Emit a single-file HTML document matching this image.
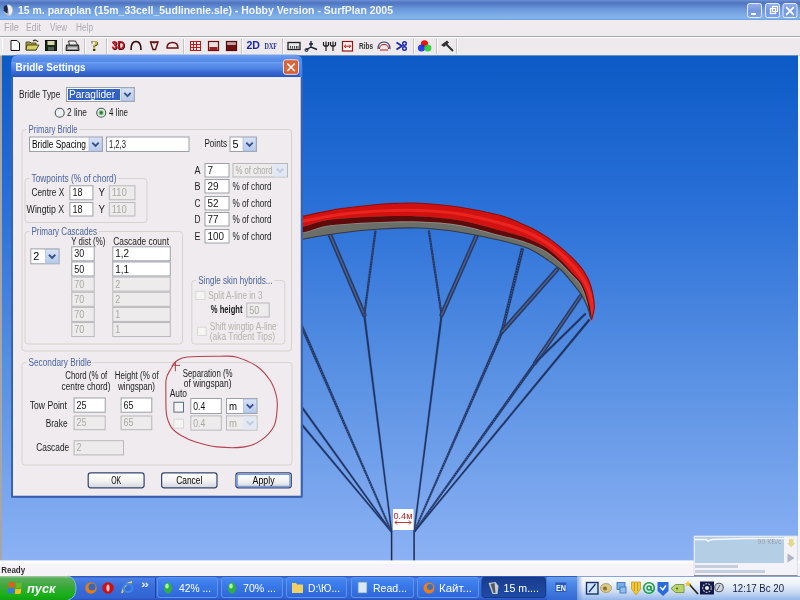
<!DOCTYPE html>
<html><head><meta charset="utf-8"><title>SurfPlan</title>
<style>html,body{margin:0;padding:0;width:800px;height:600px;overflow:hidden;background:#ECE9EC;font-family:"Liberation Sans",sans-serif;} svg{will-change:transform;}</style>
</head><body><svg width="800" height="600" viewBox="0 0 800 600" style="display:block"><defs>
<linearGradient id="sky" x1="0" y1="0" x2="0" y2="1">
 <stop offset="0" stop-color="#0C5AC6"/>
 <stop offset="0.3" stop-color="#2A70D8"/>
 <stop offset="0.6" stop-color="#558EE2"/>
 <stop offset="1" stop-color="#8CB2F4"/>
</linearGradient>
<linearGradient id="title" x1="0" y1="0" x2="0" y2="1">
 <stop offset="0" stop-color="#6C8FD6"/>
 <stop offset="0.15" stop-color="#4F74BE"/>
 <stop offset="0.45" stop-color="#6A98DC"/>
 <stop offset="0.9" stop-color="#86B6EC"/>
 <stop offset="1" stop-color="#6E9CDC"/>
</linearGradient>
<linearGradient id="dtitle" x1="0" y1="0" x2="0" y2="1">
 <stop offset="0" stop-color="#70A0F2"/>
 <stop offset="0.15" stop-color="#5C90EA"/>
 <stop offset="0.45" stop-color="#4C82E2"/>
 <stop offset="0.62" stop-color="#3A6CD4"/>
 <stop offset="0.9" stop-color="#2C5CC4"/>
 <stop offset="1" stop-color="#2850B8"/>
</linearGradient>
<linearGradient id="cbtn" x1="0" y1="0" x2="0" y2="1">
 <stop offset="0" stop-color="#D6E2F6"/>
 <stop offset="1" stop-color="#B6CAEC"/>
</linearGradient>
<linearGradient id="btng" x1="0" y1="0" x2="0" y2="1">
 <stop offset="0" stop-color="#FFFFFF"/>
 <stop offset="0.55" stop-color="#F2F2F0"/>
 <stop offset="1" stop-color="#D2D6E2"/>
</linearGradient>
<linearGradient id="task" x1="0" y1="0" x2="0" y2="1">
 <stop offset="0" stop-color="#2A50B0"/>
 <stop offset="0.1" stop-color="#4A80E8"/>
 <stop offset="0.4" stop-color="#3A6EDC"/>
 <stop offset="0.9" stop-color="#3264D4"/>
 <stop offset="1" stop-color="#2A50B8"/>
</linearGradient>
<linearGradient id="start" x1="0" y1="0" x2="0" y2="1">
 <stop offset="0" stop-color="#A4CCA4"/>
 <stop offset="0.1" stop-color="#5AAE5A"/>
 <stop offset="0.45" stop-color="#3AA83A"/>
 <stop offset="0.8" stop-color="#18B018"/>
 <stop offset="1" stop-color="#12A012"/>
</linearGradient>
<linearGradient id="tray" x1="0" y1="0" x2="0" y2="1">
 <stop offset="0" stop-color="#FAFCFF"/>
 <stop offset="0.3" stop-color="#EDF2FC"/>
 <stop offset="0.65" stop-color="#CCDCF4"/>
 <stop offset="1" stop-color="#94B6EA"/>
</linearGradient>
<linearGradient id="trayl" x1="0" y1="0" x2="1" y2="0">
 <stop offset="0" stop-color="#5080D0" stop-opacity="0.6"/>
 <stop offset="1" stop-color="#5080D0" stop-opacity="0"/>
</linearGradient>
<linearGradient id="enbg" x1="0" y1="0" x2="0" y2="1">
 <stop offset="0" stop-color="#6AA0F0"/>
 <stop offset="0.3" stop-color="#4A88E8"/>
 <stop offset="1" stop-color="#3468D4"/>
</linearGradient>
<linearGradient id="tbtn" x1="0" y1="0" x2="0" y2="1">
 <stop offset="0" stop-color="#4A8AF0"/>
 <stop offset="0.3" stop-color="#3C7CEC"/>
 <stop offset="1" stop-color="#2E66D8"/>
</linearGradient>
<linearGradient id="tbtnact" x1="0" y1="0" x2="0" y2="1">
 <stop offset="0" stop-color="#1A3C8C"/>
 <stop offset="1" stop-color="#1E4CA8"/>
</linearGradient>
<linearGradient id="redc" x1="0" y1="0" x2="0" y2="1">
 <stop offset="0" stop-color="#B81010"/>
 <stop offset="0.35" stop-color="#F01818"/>
 <stop offset="0.7" stop-color="#FF3A30"/>
 <stop offset="1" stop-color="#A01010"/>
</linearGradient>
<linearGradient id="redband" gradientUnits="userSpaceOnUse" x1="0" y1="200" x2="0" y2="320">
 <stop offset="0" stop-color="#D01010"/>
 <stop offset="1" stop-color="#E01818"/>
</linearGradient>
<linearGradient id="inbtn" x1="0" y1="0" x2="0" y2="1">
 <stop offset="0" stop-color="#94B0EC"/>
 <stop offset="0.5" stop-color="#7898DC"/>
 <stop offset="1" stop-color="#7AA4E4"/>
</linearGradient>
</defs>
<rect x="0" y="0" width="800" height="600" fill="#ECE9EC" />
<rect x="0" y="0" width="800" height="20" fill="url(#title)" />
<path d="M3.5,7 Q5.5,4 9,4.5 Q13,5.5 13,10 Q12.5,15.5 9.5,16 Q5.5,15.5 3.5,11.5 Q2.8,9 3.5,7 Z" fill="#B8C0CC" />
<path d="M7,5 Q11.5,5 12.2,9.5 Q12.5,14 9.5,15.5 Q9,10 7,5 Z" fill="#ECEEF4" />
<path d="M3.5,7 Q5,4.8 7,5 Q8.5,9 7.5,13.5 Q5,12.5 3.5,10.5 Z" fill="#1E2C4C" />
<text x="18.00" y="14.08" font-size="10.5" fill="#F2F6FC" font-weight="bold" font-style="normal" font-family="Liberation Sans" textLength="375.00" lengthAdjust="spacingAndGlyphs">15 m. paraplan (15m_33cell_5udlinenie.sle) - Hobby Version - SurfPlan 2005</text>
<rect x="747.5" y="3.5" width="14" height="14" rx="2" fill="url(#inbtn)" stroke="#E4ECFA" stroke-width="1"/>
<rect x="765.5" y="3.5" width="14" height="14" rx="2" fill="url(#inbtn)" stroke="#E4ECFA" stroke-width="1"/>
<rect x="783.0" y="3.5" width="14" height="14" rx="2" fill="url(#inbtn)" stroke="#E4ECFA" stroke-width="1"/>
<rect x="751" y="13" width="5" height="2" fill="#fff" />
<rect x="770.5" y="8.5" width="5" height="5" fill="none" stroke="#fff" stroke-width="1.2" />
<rect x="772.5" y="6.5" width="5" height="5" fill="none" stroke="#fff" stroke-width="1.2" />
<path d="M786.2,7.2 L793.8,14.8 M793.8,7.2 L786.2,14.8" fill="none" stroke="#fff" stroke-width="1.8" />
<rect x="0" y="20" width="800" height="16" fill="#EFEBEF" />
<text x="4.00" y="31.40" font-size="10" fill="#ABA9B0" font-weight="normal" font-style="normal" font-family="Liberation Sans" textLength="15.00" lengthAdjust="spacingAndGlyphs">File</text>
<text x="26.00" y="31.40" font-size="10" fill="#ABA9B0" font-weight="normal" font-style="normal" font-family="Liberation Sans" textLength="15.00" lengthAdjust="spacingAndGlyphs">Edit</text>
<text x="50.00" y="31.40" font-size="10" fill="#ABA9B0" font-weight="normal" font-style="normal" font-family="Liberation Sans" textLength="17.00" lengthAdjust="spacingAndGlyphs">View</text>
<text x="76.00" y="31.40" font-size="10" fill="#ABA9B0" font-weight="normal" font-style="normal" font-family="Liberation Sans" textLength="17.00" lengthAdjust="spacingAndGlyphs">Help</text>
<line x1="0" y1="36.5" x2="800" y2="36.5" stroke="#A8A8A8" stroke-width="1" />
<line x1="0" y1="37.5" x2="800" y2="37.5" stroke="#FFFFFF" stroke-width="1" />
<rect x="0" y="38" width="800" height="17.5" fill="#EDE9EC" />
<line x1="2.5" y1="39" x2="2.5" y2="54" stroke="#FFFFFF" stroke-width="1" />
<line x1="62.5" y1="39" x2="62.5" y2="54" stroke="#C6C3C6" stroke-width="1" />
<line x1="63.5" y1="39" x2="63.5" y2="54" stroke="#FFFFFF" stroke-width="1" />
<line x1="84.5" y1="39" x2="84.5" y2="54" stroke="#C6C3C6" stroke-width="1" />
<line x1="85.5" y1="39" x2="85.5" y2="54" stroke="#FFFFFF" stroke-width="1" />
<line x1="106.5" y1="39" x2="106.5" y2="54" stroke="#C6C3C6" stroke-width="1" />
<line x1="107.5" y1="39" x2="107.5" y2="54" stroke="#FFFFFF" stroke-width="1" />
<line x1="183.5" y1="39" x2="183.5" y2="54" stroke="#C6C3C6" stroke-width="1" />
<line x1="184.5" y1="39" x2="184.5" y2="54" stroke="#FFFFFF" stroke-width="1" />
<line x1="241.5" y1="39" x2="241.5" y2="54" stroke="#C6C3C6" stroke-width="1" />
<line x1="242.5" y1="39" x2="242.5" y2="54" stroke="#FFFFFF" stroke-width="1" />
<line x1="282.5" y1="39" x2="282.5" y2="54" stroke="#C6C3C6" stroke-width="1" />
<line x1="283.5" y1="39" x2="283.5" y2="54" stroke="#FFFFFF" stroke-width="1" />
<line x1="413.5" y1="39" x2="413.5" y2="54" stroke="#C6C3C6" stroke-width="1" />
<line x1="414.5" y1="39" x2="414.5" y2="54" stroke="#FFFFFF" stroke-width="1" />
<line x1="436.5" y1="39" x2="436.5" y2="54" stroke="#C6C3C6" stroke-width="1" />
<line x1="437.5" y1="39" x2="437.5" y2="54" stroke="#FFFFFF" stroke-width="1" />
<line x1="456.5" y1="39" x2="456.5" y2="54" stroke="#C6C3C6" stroke-width="1" />
<line x1="457.5" y1="39" x2="457.5" y2="54" stroke="#FFFFFF" stroke-width="1" />
<path d="M11,40.5 L17,40.5 L19.5,43 L19.5,50.5 L11,50.5 Z" fill="#fff" stroke="#111" stroke-width="1" />
<path d="M26,42 L30,42 L31,43 L36,43 L36,50 L26,50 Z" fill="#A8A040" stroke="#303010" stroke-width="0.8" />
<path d="M27,45 L39,45 L36,50 L26,50 Z" fill="#D8D060" stroke="#303010" stroke-width="0.8" />
<path d="M33,41 Q36,39 38,42" fill="none" stroke="#303010" stroke-width="1.2" />
<rect x="45.5" y="40.5" width="11" height="10" fill="#1A2A10" stroke="#101010" stroke-width="1" />
<rect x="47.5" y="41" width="7" height="4" fill="#D8D8B0" />
<rect x="48" y="47" width="6" height="3.5" fill="#506050" />
<path d="M66.5,45 L78.5,45 L79,50.5 L66,50.5 Z" fill="#8A8A8A" stroke="#1A1A1A" stroke-width="1" />
<path d="M68.5,41 L75.5,41 L77.5,45 L69.5,45 Z" fill="#F0F0F0" stroke="#1A1A1A" stroke-width="0.9" />
<rect x="68" y="47.5" width="9" height="1.3" fill="#E8E8E8" />
<text x="90.50" y="50.64" font-size="14" fill="#3A3408" font-weight="bold" font-style="normal" font-family="Liberation Serif" textLength="8.50" lengthAdjust="spacingAndGlyphs">?</text>
<text x="91.50" y="49.34" font-size="11.5" fill="#D8C040" font-weight="bold" font-style="normal" font-family="Liberation Serif" textLength="6.50" lengthAdjust="spacingAndGlyphs">?</text>
<text x="112.20" y="49.76" font-size="11" fill="#400808" font-weight="bold" font-style="normal" font-family="Liberation Sans" textLength="13.30" lengthAdjust="spacingAndGlyphs">3D</text>
<text x="111.50" y="49.26" font-size="11" fill="#C8101C" font-weight="bold" font-style="normal" font-family="Liberation Sans" textLength="13.30" lengthAdjust="spacingAndGlyphs">3D</text>
<path d="M131,50 Q131,41.5 136,41.5 Q141,41.5 141,50" fill="none" stroke="#300808" stroke-width="1.6" />
<path d="M150.5,42 L158,42 L155.5,49.5 L153,49.5 Z" fill="none" stroke="#601010" stroke-width="1.4" />
<path d="M150.5,42 Q154,44 158,42" fill="none" stroke="#601010" stroke-width="1" />
<path d="M167,48 Q167,42.5 172.5,42.5 Q178,42.5 178,48 Z" fill="#F4E8E8" stroke="#6A1010" stroke-width="1.4" />
<rect x="190.5" y="41.5" width="10" height="9" fill="#FFE8E8" stroke="#C01818" stroke-width="1" />
<line x1="193.5" y1="41.5" x2="193.5" y2="50.5" stroke="#C01818" stroke-width="1" />
<line x1="196.5" y1="41.5" x2="196.5" y2="50.5" stroke="#C01818" stroke-width="1" />
<line x1="190.5" y1="44.5" x2="200.5" y2="44.5" stroke="#C01818" stroke-width="1" />
<line x1="190.5" y1="47.5" x2="200.5" y2="47.5" stroke="#C01818" stroke-width="1" />
<rect x="208.5" y="41.5" width="10" height="9" fill="#E8E0E0" stroke="#700C10" stroke-width="1.2" />
<rect x="209.5" y="47" width="8" height="3" fill="#9A2020" />
<rect x="226.5" y="41.5" width="10" height="9" fill="#C0A0A0" stroke="#500A0A" stroke-width="1.2" />
<rect x="227" y="45" width="9" height="5" fill="#701010" />
<text x="246.50" y="49.46" font-size="11" fill="#1A28A8" font-weight="bold" font-style="normal" font-family="Liberation Sans" textLength="13.50" lengthAdjust="spacingAndGlyphs">2D</text>
<text x="264.50" y="48.50" font-size="7.5" fill="#2030A0" font-weight="bold" font-style="normal" font-family="Liberation Serif" textLength="12.50" lengthAdjust="spacingAndGlyphs">DXF</text>
<rect x="288" y="42.5" width="12" height="7" fill="#E8E8E8" stroke="#202020" stroke-width="1.3" />
<line x1="290.5" y1="46" x2="290.5" y2="48.5" stroke="#303030" stroke-width="0.9" />
<line x1="292.5" y1="46" x2="292.5" y2="48.5" stroke="#303030" stroke-width="0.9" />
<line x1="294.5" y1="46" x2="294.5" y2="48.5" stroke="#303030" stroke-width="0.9" />
<line x1="296.5" y1="46" x2="296.5" y2="48.5" stroke="#303030" stroke-width="0.9" />
<line x1="298" y1="46" x2="298" y2="48.5" stroke="#303030" stroke-width="0.9" />
<path d="M311,41 L311,47 M306,50 L311,47 L317,49.5 M309,44 L313,44" fill="none" stroke="#182038" stroke-width="1.4" />
<circle cx="306.5" cy="50" r="1.5" fill="none" stroke="#182038" stroke-width="1"/>
<path d="M323.5,42 L323.5,45 Q326,48 328.5,45 L328.5,42 M326,41.5 L326,51 M330.5,42 L330.5,45 Q333,48 335.5,45 L335.5,42 M333,41.5 L333,51" fill="none" stroke="#202020" stroke-width="1.2" />
<rect x="342.5" y="41.5" width="10" height="9.5" fill="#FFF4F4" stroke="#901818" stroke-width="1.2" />
<path d="M344.5,46.2 L350.5,46.2 M346,44.5 L344.3,46.2 L346,48 M349,44.5 L350.7,46.2 L349,48" fill="none" stroke="#D01010" stroke-width="1" />
<text x="359.00" y="49.42" font-size="9.5" fill="#303030" font-weight="bold" font-style="normal" font-family="Liberation Sans" textLength="14.00" lengthAdjust="spacingAndGlyphs">Ribs</text>
<path d="M378,49 Q378,42 384,42 Q390,42 390,49" fill="none" stroke="#304070" stroke-width="1.2" />
<path d="M379.5,49 Q379.5,44.5 384,44.5 Q388.5,44.5 388.5,49" fill="none" stroke="#B02020" stroke-width="1" />
<line x1="380" y1="50" x2="388" y2="50" stroke="#B02020" stroke-width="1" />
<path d="M396.5,42.5 L402,46 L396.5,49.5" fill="none" stroke="#1828A8" stroke-width="1.8" />
<circle cx="404.5" cy="43.5" r="1.8" fill="none" stroke="#1828A8" stroke-width="1.4"/>
<circle cx="404.5" cy="48.5" r="1.8" fill="none" stroke="#1828A8" stroke-width="1.4"/>
<circle cx="424.5" cy="43.8" r="3.6" fill="#F01010"/>
<circle cx="421.5" cy="48" r="3.6" fill="#1830F0" opacity="0.92"/>
<circle cx="427.8" cy="48" r="3.6" fill="#20D030" opacity="0.9"/>
<path d="M441,45 L447,40.5 L449,42.5 L444,47 Z" fill="#303030" />
<path d="M446,44 L453,51" fill="none" stroke="#303030" stroke-width="2" />
<rect x="0" y="55.5" width="800" height="505.5" fill="#A4A6AA" />
<rect x="2" y="55.5" width="796" height="505.5" fill="url(#sky)" />
<rect x="798" y="55.5" width="2" height="505.5" fill="#F4F4F4" />
<line x1="391.6" y1="561" x2="391.6" y2="532" stroke="#1E2C50" stroke-width="1.5" stroke-linecap="round" opacity="1"/>
<line x1="414.1" y1="561" x2="414.1" y2="532" stroke="#1E2C50" stroke-width="1.5" stroke-linecap="round" opacity="1"/>
<path d="M392.37,531.36 L297.00,416.77 L295.00,418.43 L390.83,532.64 Z" fill="#4A6498" opacity="0.55"/>
<path d="M392.10,531.58 L296.65,417.05 L295.35,418.15 L391.10,532.42 Z" fill="#1E3466" opacity="1"/>
<path d="M392.41,531.42 L297.14,398.18 L294.86,399.82 L390.79,532.58 Z" fill="#4A6498" opacity="0.55"/>
<path d="M392.13,531.62 L296.77,398.45 L295.23,399.55 L391.07,532.38 Z" fill="#1E3466" opacity="1"/>
<path d="M392.61,531.56 L297.74,312.54 L294.26,314.06 L390.59,532.44 Z" fill="#4A6498" opacity="0.6"/>
<path d="M392.24,531.72 L297.28,312.74 L294.72,313.86 L390.96,532.28 Z" fill="#1E3466" opacity="1"/>
<line x1="391.6" y1="532" x2="296" y2="313.3" stroke="#6A84B8" stroke-width="0.98" stroke-dasharray="1 1.6" opacity="0.65"/>
<path d="M392.59,531.88 L365.69,314.83 L362.91,315.17 L390.61,532.12 Z" fill="#4A6498" opacity="0.55"/>
<path d="M392.24,531.92 L365.24,314.88 L363.36,315.12 L390.96,532.08 Z" fill="#1E3466" opacity="1"/>
<line x1="364.3" y1="315" x2="330" y2="235" stroke="#283A64" stroke-width="4.6" stroke-linecap="round" opacity="1"/>
<line x1="364.3" y1="315" x2="330" y2="235" stroke="#50648E" stroke-width="1.52" stroke-linecap="round" opacity="0.9"/>
<path d="M365.64,315.18 L376.99,230.70 L374.01,230.30 L362.96,314.82 Z" fill="#4A6498" opacity="0.6"/>
<path d="M365.24,315.12 L376.49,230.63 L374.51,230.37 L363.36,314.88 Z" fill="#1E3466" opacity="1"/>
<line x1="364.3" y1="315" x2="375.5" y2="230.5" stroke="#6A84B8" stroke-width="0.70" stroke-dasharray="1 1.6" opacity="0.65"/>
<path d="M415.09,532.13 L442.99,315.18 L440.21,314.82 L413.11,531.87 Z" fill="#4A6498" opacity="0.55"/>
<path d="M414.74,532.08 L442.54,315.12 L440.66,314.88 L413.46,531.92 Z" fill="#1E3466" opacity="1"/>
<path d="M442.93,314.80 L430.28,230.28 L427.32,230.72 L440.27,315.20 Z" fill="#4A6498" opacity="0.6"/>
<path d="M442.54,314.86 L429.79,230.35 L427.81,230.65 L440.66,315.14 Z" fill="#1E3466" opacity="1"/>
<line x1="441.6" y1="315" x2="428.8" y2="230.5" stroke="#6A84B8" stroke-width="0.70" stroke-dasharray="1 1.6" opacity="0.65"/>
<line x1="441.6" y1="315" x2="476.5" y2="236" stroke="#283A64" stroke-width="4.4" stroke-linecap="round" opacity="1"/>
<line x1="441.6" y1="315" x2="476.5" y2="236" stroke="#50648E" stroke-width="1.4400000000000002" stroke-linecap="round" opacity="0.9"/>
<path d="M415.11,532.44 L503.74,332.46 L500.26,330.94 L413.09,531.56 Z" fill="#4A6498" opacity="0.6"/>
<path d="M414.74,532.28 L503.28,332.26 L500.72,331.14 L413.46,531.72 Z" fill="#1E3466" opacity="1"/>
<line x1="414.1" y1="532" x2="502" y2="331.7" stroke="#6A84B8" stroke-width="0.98" stroke-dasharray="1 1.6" opacity="0.65"/>
<path d="M503.75,332.13 L524.54,248.80 L520.46,247.80 L500.25,331.27 Z" fill="#4A6498" opacity="0.6"/>
<path d="M503.36,332.03 L524.05,248.68 L520.95,247.92 L500.64,331.37 Z" fill="#1E3466" opacity="1"/>
<line x1="502" y1="331.7" x2="522.5" y2="248.3" stroke="#6A84B8" stroke-width="1.12" stroke-dasharray="1 1.6" opacity="0.65"/>
<line x1="502" y1="331.7" x2="557" y2="269.4" stroke="#283A64" stroke-width="4.6" stroke-linecap="round" opacity="1"/>
<line x1="502" y1="331.7" x2="557" y2="269.4" stroke="#50648E" stroke-width="1.52" stroke-linecap="round" opacity="0.9"/>
<path d="M414.99,532.64 L536.55,364.11 L533.45,361.89 L413.21,531.36 Z" fill="#4A6498" opacity="0.6"/>
<path d="M414.67,532.41 L536.14,363.81 L533.86,362.19 L413.53,531.59 Z" fill="#1E3466" opacity="1"/>
<line x1="414.1" y1="532" x2="535" y2="363" stroke="#6A84B8" stroke-width="0.98" stroke-dasharray="1 1.6" opacity="0.65"/>
<line x1="535" y1="363" x2="580.5" y2="296.2" stroke="#283A64" stroke-width="4.2" stroke-linecap="round" opacity="1"/>
<line x1="535" y1="363" x2="580.5" y2="296.2" stroke="#50648E" stroke-width="1.36" stroke-linecap="round" opacity="0.9"/>
<path d="M535.87,363.89 L586.64,314.47 L584.76,312.53 L534.13,362.11 Z" fill="#4A6498" opacity="0.55"/>
<path d="M535.63,363.64 L586.33,314.14 L585.07,312.86 L534.37,362.36 Z" fill="#1E3466" opacity="1"/>
<path d="M414.87,532.64 L590.62,320.42 L588.38,318.58 L413.33,531.36 Z" fill="#4A6498" opacity="0.55"/>
<path d="M414.60,532.41 L590.27,320.14 L588.73,318.86 L413.60,531.59 Z" fill="#1E3466" opacity="1"/>
<path d="M270.00,225.00 C275.50,223.55 293.00,218.70 303.00,216.30 C313.00,213.90 323.83,211.87 330.00,210.60 C336.17,209.33 331.67,209.77 340.00,208.70 C348.33,207.63 370.83,205.08 380.00,204.20 C389.17,203.32 388.33,203.55 395.00,203.40 C401.67,203.25 409.17,202.67 420.00,203.30 C430.83,203.93 446.67,205.20 460.00,207.20 C473.33,209.20 490.00,212.68 500.00,215.30 C510.00,217.92 514.45,220.63 520.00,222.90 C525.55,225.17 528.85,226.57 533.30,228.90 C537.75,231.23 542.25,233.90 546.70,236.90 C551.15,239.90 555.57,243.22 560.00,246.90 C564.43,250.58 569.30,254.90 573.30,259.00 C577.30,263.10 581.13,267.17 584.00,271.50 C586.87,275.83 588.87,280.25 590.50,285.00 C592.13,289.75 593.22,295.83 593.80,300.00 C594.38,304.17 594.38,306.75 594.00,310.00 C593.62,313.25 591.92,317.92 591.50,319.50 L591.50,319.50 C591.25,318.92 590.70,318.13 590.00,316.00 C589.30,313.87 588.72,310.20 587.30,306.70 C585.88,303.20 584.05,299.03 581.50,295.00 C578.95,290.97 575.42,286.67 572.00,282.50 C568.58,278.33 565.17,273.83 561.00,270.00 C556.83,266.17 551.67,262.72 547.00,259.50 C542.33,256.28 537.50,253.02 533.00,250.70 C528.50,248.38 525.50,247.33 520.00,245.60 C514.50,243.87 510.00,242.53 500.00,240.30 C490.00,238.07 473.33,234.25 460.00,232.20 C446.67,230.15 433.33,228.53 420.00,228.00 C406.67,227.47 393.33,228.17 380.00,229.00 C366.67,229.83 352.75,231.33 340.00,233.00 C327.25,234.67 313.50,237.00 303.50,239.00 C293.50,241.00 283.92,244.00 280.00,245.00 Z" fill="#6C6E68" />
<path d="M280.32,234.98 C284.27,234.52 295.67,233.83 304.01,232.20 C312.35,230.58 317.68,226.93 330.37,225.23 C343.05,223.52 365.19,222.57 380.11,221.95 C395.03,221.33 406.64,220.99 419.89,221.50 C433.14,222.01 446.36,222.77 459.62,225.02 C472.88,227.26 489.48,232.50 499.45,234.98 C509.41,237.46 513.95,238.34 519.42,239.91 C524.89,241.48 527.83,242.51 532.29,244.40 C536.75,246.29 541.49,248.22 546.16,251.24 C550.83,254.26 555.94,258.56 560.31,262.53 C564.69,266.50 569.24,271.73 572.42,275.05 C575.60,278.36 577.48,279.73 579.38,282.43 C581.29,285.13 582.43,287.63 583.85,291.25 C585.26,294.87 587.20,302.01 587.87,304.16" fill="none" stroke="#9A9A92" stroke-width="1.8" opacity="0.7"/>
<path d="M270.00,225.00 C275.50,223.55 293.00,218.70 303.00,216.30 C313.00,213.90 323.83,211.87 330.00,210.60 C336.17,209.33 331.67,209.77 340.00,208.70 C348.33,207.63 370.83,205.08 380.00,204.20 C389.17,203.32 388.33,203.55 395.00,203.40 C401.67,203.25 409.17,202.67 420.00,203.30 C430.83,203.93 446.67,205.20 460.00,207.20 C473.33,209.20 490.00,212.68 500.00,215.30 C510.00,217.92 514.45,220.63 520.00,222.90 C525.55,225.17 528.85,226.57 533.30,228.90 C537.75,231.23 542.25,233.90 546.70,236.90 C551.15,239.90 555.57,243.22 560.00,246.90 C564.43,250.58 569.30,254.90 573.30,259.00 C577.30,263.10 581.13,267.17 584.00,271.50 C586.87,275.83 588.87,280.25 590.50,285.00 C592.13,289.75 593.22,295.83 593.80,300.00 C594.38,304.17 594.38,306.75 594.00,310.00 C593.62,313.25 591.92,317.92 591.50,319.50 L591.75,319.46 C591.64,318.53 591.53,316.49 591.09,313.89 C590.65,311.28 590.12,307.69 589.13,303.84 C588.14,299.98 586.57,294.46 585.15,290.75 C583.73,287.04 582.54,284.37 580.62,281.57 C578.69,278.77 576.74,277.37 573.58,273.95 C570.43,270.54 565.98,265.27 561.69,261.07 C557.40,256.87 552.50,252.07 547.84,248.76 C543.18,245.45 538.25,243.31 533.71,241.20 C529.17,239.09 526.11,237.85 520.58,236.09 C515.05,234.32 510.59,233.20 500.55,230.62 C490.52,228.04 473.79,222.94 460.38,220.58 C446.98,218.23 433.53,217.19 420.11,216.50 C406.70,215.81 394.97,215.91 379.89,216.45 C364.81,217.00 342.45,218.05 329.63,219.77 C316.82,221.50 311.31,225.26 302.99,226.80 C294.66,228.34 283.57,228.65 279.68,229.02 Z" fill="url(#redband)" />
<path d="M280.00,224.00 C283.92,223.50 293.50,222.58 303.50,221.00 C313.50,219.42 327.25,216.17 340.00,214.50 C352.75,212.83 366.67,211.67 380.00,211.00 C393.33,210.33 406.67,210.00 420.00,210.50 C433.33,211.00 446.67,211.92 460.00,214.00 C473.33,216.08 490.00,220.42 500.00,223.00 C510.00,225.58 514.50,227.50 520.00,229.50 C525.50,231.50 528.50,232.75 533.00,235.00 C537.50,237.25 542.33,239.83 547.00,243.00 C551.67,246.17 556.67,250.17 561.00,254.00 C565.33,257.83 569.67,262.33 573.00,266.00 C576.33,269.67 578.58,272.50 581.00,276.00 C583.42,279.50 585.75,283.00 587.50,287.00 C589.25,291.00 590.67,295.83 591.50,300.00 C592.33,304.17 592.50,308.75 592.50,312.00 C592.50,315.25 591.67,318.25 591.50,319.50" fill="none" stroke="#FF3A30" stroke-width="3.2" opacity="0.5" stroke-linecap="round"/>
<path d="M279.68,229.02 C283.57,228.65 294.66,228.34 302.99,226.80 C311.31,225.26 316.82,221.50 329.63,219.77 C342.45,218.05 364.81,217.00 379.89,216.45 C394.97,215.91 406.70,215.81 420.11,216.50 C433.53,217.19 446.98,218.23 460.38,220.58 C473.79,222.94 490.52,228.04 500.55,230.62 C510.59,233.20 515.05,234.32 520.58,236.09 C526.11,237.85 529.17,239.09 533.71,241.20 C538.25,243.31 543.18,245.45 547.84,248.76 C552.50,252.07 557.40,256.87 561.69,261.07 C565.98,265.27 570.43,270.54 573.58,273.95 C576.74,277.37 578.69,278.77 580.62,281.57 C582.54,284.37 583.73,287.04 585.15,290.75 C586.57,294.46 588.14,299.98 589.13,303.84 C590.12,307.69 590.65,311.28 591.09,313.89 C591.53,316.49 591.64,318.53 591.75,319.46 L591.25,319.54 C591.03,318.64 590.47,316.68 589.91,314.11 C589.35,311.55 588.88,307.97 587.87,304.16 C586.86,300.35 585.26,294.87 583.85,291.25 C582.43,287.63 581.29,285.13 579.38,282.43 C577.48,279.73 575.60,278.36 572.42,275.05 C569.24,271.73 564.69,266.50 560.31,262.53 C555.94,258.56 550.83,254.26 546.16,251.24 C541.49,248.22 536.75,246.29 532.29,244.40 C527.83,242.51 524.89,241.48 519.42,239.91 C513.95,238.34 509.41,237.46 499.45,234.98 C489.48,232.50 472.88,227.26 459.62,225.02 C446.36,222.77 433.14,222.01 419.89,221.50 C406.64,220.99 395.03,221.33 380.11,221.95 C365.19,222.57 343.05,223.52 330.37,225.23 C317.68,226.93 312.35,230.58 304.01,232.20 C295.67,233.83 284.27,234.52 280.32,234.98 Z" fill="#5E0A0A" />
<path d="M270.00,225.00 C275.50,223.55 293.00,218.70 303.00,216.30 C313.00,213.90 323.83,211.87 330.00,210.60 C336.17,209.33 331.67,209.77 340.00,208.70 C348.33,207.63 370.83,205.08 380.00,204.20 C389.17,203.32 388.33,203.55 395.00,203.40 C401.67,203.25 409.17,202.67 420.00,203.30 C430.83,203.93 446.67,205.20 460.00,207.20 C473.33,209.20 490.00,212.68 500.00,215.30 C510.00,217.92 514.45,220.63 520.00,222.90 C525.55,225.17 528.85,226.57 533.30,228.90 C537.75,231.23 542.25,233.90 546.70,236.90 C551.15,239.90 555.57,243.22 560.00,246.90 C564.43,250.58 569.30,254.90 573.30,259.00 C577.30,263.10 581.13,267.17 584.00,271.50 C586.87,275.83 588.87,280.25 590.50,285.00 C592.13,289.75 593.22,295.83 593.80,300.00 C594.38,304.17 594.38,306.75 594.00,310.00 C593.62,313.25 591.92,317.92 591.50,319.50" fill="none" stroke="#8A0E0E" stroke-width="1.1" />
<path d="M280.00,245.00 C283.92,244.00 293.50,241.00 303.50,239.00 C313.50,237.00 327.25,234.67 340.00,233.00 C352.75,231.33 366.67,229.83 380.00,229.00 C393.33,228.17 406.67,227.47 420.00,228.00 C433.33,228.53 446.67,230.15 460.00,232.20 C473.33,234.25 490.00,238.07 500.00,240.30 C510.00,242.53 514.50,243.87 520.00,245.60 C525.50,247.33 528.50,248.38 533.00,250.70 C537.50,253.02 542.33,256.28 547.00,259.50 C551.67,262.72 556.83,266.17 561.00,270.00 C565.17,273.83 568.58,278.33 572.00,282.50 C575.42,286.67 578.95,290.97 581.50,295.00 C584.05,299.03 585.88,303.20 587.30,306.70 C588.72,310.20 589.30,313.87 590.00,316.00 C590.70,318.13 591.25,318.92 591.50,319.50" fill="none" stroke="#343844" stroke-width="1.1" />
<rect x="393" y="509" width="20.5" height="21" fill="#FFFFFF" />
<text x="393.50" y="518.56" font-size="8.5" fill="#C02020" font-weight="normal" font-style="normal" font-family="Liberation Sans" textLength="19.00" lengthAdjust="spacingAndGlyphs">0.4м</text>
<path d="M395,522.5 L411,522.5 M397,520.5 L395,522.5 L397,524.5 M409,520.5 L411,522.5 L409,524.5" fill="none" stroke="#C02020" stroke-width="0.9" />
<rect x="0" y="560.6" width="800" height="15.4" fill="#F5F3F8" />
<rect x="0" y="560.6" width="800" height="3" fill="#FCFCFE" />
<text x="1.20" y="573.37" font-size="8.8" fill="#080808" font-weight="bold" font-style="normal" font-family="Liberation Sans" textLength="24.00" lengthAdjust="spacingAndGlyphs" opacity="0.85">Ready</text>
<rect x="694" y="536" width="103.5" height="39.5" fill="#F2F2F8" stroke="#D8DCE4" stroke-width="0.8" />
<rect x="695" y="537" width="89" height="26" fill="#B4CEE6" />
<path d="M695,539.5 L706,539.5 L708,541 L712,539.5 L730,539 L745,538.5 L784,538.5" fill="none" stroke="#F4F8FC" stroke-width="1.6" />
<text x="757.50" y="544.38" font-size="8" fill="#E4ECF6" font-weight="normal" font-style="normal" font-family="Liberation Sans" textLength="24.00" lengthAdjust="spacingAndGlyphs">90 КБ/с</text>
<text x="757.50" y="544.38" font-size="8" fill="#7888A0" font-weight="normal" font-style="normal" font-family="Liberation Sans" textLength="24.00" lengthAdjust="spacingAndGlyphs" opacity="0.85">90 КБ/с</text>
<path d="M789,539 L793.5,539 L793.5,543 L795.5,543 L791.2,547.5 L787,543 L789,543 Z" fill="#E4D88C" />
<path d="M787.5,553.5 L794.5,558 L787.5,562.5 Z" fill="#AEB6C4" />
<rect x="695" y="565" width="43" height="3" fill="#C4CEDC" />
<rect x="695" y="570" width="70" height="3" fill="#C4CEDC" />
<line x1="694" y1="575.5" x2="797.5" y2="575.5" stroke="#8C8C94" stroke-width="1" />
<rect x="0" y="576" width="800" height="24" fill="url(#task)" />
<path d="M0,576 L68,576 Q76,578 76,588 Q76,598 68,600 L0,600 Z" fill="url(#start)" />
<path d="M68,576 Q76,578 76,588 Q76,598 68,600" fill="none" stroke="#7ABAF0" stroke-width="1" />
<path d="M9,582.5 Q12,581.5 15,582.5 L14.5,587.5 Q11.5,586.5 8.5,587.5 Z" fill="#E85A20" />
<path d="M16,582.7 Q19,583.5 22,582.5 L21.5,587.5 Q18.5,588.5 15.5,587.7 Z" fill="#6AB828" />
<path d="M8.3,588.5 Q11.3,587.5 14.3,588.5 L13.8,593.5 Q10.8,592.5 7.8,593.5 Z" fill="#3A78E0" />
<path d="M15.3,588.7 Q18.3,589.5 21.3,588.5 L20.8,593.5 Q17.8,594.5 14.8,593.7 Z" fill="#F0C020" />
<text x="27.00" y="592.50" font-size="12.5" fill="#F4FFF4" font-weight="bold" font-style="italic" font-family="Liberation Sans" textLength="28.50" lengthAdjust="spacingAndGlyphs">пуск</text>
<circle cx="91" cy="588" r="5.8" fill="#E87A10"/>
<circle cx="92" cy="587" r="3.5" fill="#3A68B8"/>
<circle cx="108" cy="588" r="5.8" fill="#D01010"/>
<ellipse cx="108" cy="588" rx="1.6" ry="3.6" fill="#F8C8C8"/>
<path d="M122,593 Q124,583 132,582" fill="none" stroke="#E0D060" stroke-width="1.8" />
<ellipse cx="128" cy="588" rx="4.5" ry="4" fill="none" stroke="#3A8AE8" stroke-width="2"/>
<text x="141.00" y="587.60" font-size="10" fill="#E0ECFC" font-weight="bold" font-style="normal" font-family="Liberation Sans" textLength="8.00" lengthAdjust="spacingAndGlyphs">»</text>
<line x1="155.5" y1="578" x2="155.5" y2="598" stroke="#1A48A8" stroke-width="1" />
<rect x="157.5" y="577.5" width="60" height="20" rx="2.5" fill="url(#tbtn)" stroke="#5A96F0" stroke-width="1"/>
<ellipse cx="168" cy="588" rx="4" ry="5.5" fill="#30B040"/>
<ellipse cx="167" cy="586" rx="1.8" ry="2.5" fill="#B0F0B0"/>
<text x="179.00" y="591.60" font-size="10" fill="#FFFFFF" font-weight="normal" font-style="normal" font-family="Liberation Sans" textLength="32.00" lengthAdjust="spacingAndGlyphs">42% ...</text>
<rect x="221.5" y="577.5" width="61" height="20" rx="2.5" fill="url(#tbtn)" stroke="#5A96F0" stroke-width="1"/>
<ellipse cx="232" cy="588" rx="4" ry="5.5" fill="#30B040"/>
<ellipse cx="231" cy="586" rx="1.8" ry="2.5" fill="#B0F0B0"/>
<text x="243.00" y="591.60" font-size="10" fill="#FFFFFF" font-weight="normal" font-style="normal" font-family="Liberation Sans" textLength="33.00" lengthAdjust="spacingAndGlyphs">70% ...</text>
<rect x="286.5" y="577.5" width="60" height="20" rx="2.5" fill="url(#tbtn)" stroke="#5A96F0" stroke-width="1"/>
<path d="M292,583 L296,583 L297,584.5 L303,584.5 L303,593 L292,593 Z" fill="#F0D060" />
<text x="308.00" y="591.60" font-size="10" fill="#FFFFFF" font-weight="normal" font-style="normal" font-family="Liberation Sans" textLength="32.00" lengthAdjust="spacingAndGlyphs">D:\Ю...</text>
<rect x="351.5" y="577.5" width="62" height="20" rx="2.5" fill="url(#tbtn)" stroke="#5A96F0" stroke-width="1"/>
<rect x="358" y="582" width="9" height="11" fill="#D8E8F4" stroke="#6090B0" stroke-width="0.8" />
<text x="373.00" y="591.60" font-size="10" fill="#FFFFFF" font-weight="normal" font-style="normal" font-family="Liberation Sans" textLength="34.00" lengthAdjust="spacingAndGlyphs">Read...</text>
<rect x="417.5" y="577.5" width="61" height="20" rx="2.5" fill="url(#tbtn)" stroke="#5A96F0" stroke-width="1"/>
<circle cx="429" cy="588" r="5.5" fill="#E8801A"/>
<circle cx="430" cy="587" r="3" fill="#4070C0"/>
<text x="439.00" y="591.60" font-size="10" fill="#FFFFFF" font-weight="normal" font-style="normal" font-family="Liberation Sans" textLength="33.00" lengthAdjust="spacingAndGlyphs">Кайт...</text>
<rect x="482.0" y="577.5" width="63.5" height="20" rx="2.5" fill="url(#tbtnact)" stroke="#173A88" stroke-width="1"/>
<path d="M488.5,583 L495.5,582 L498.5,586 L497.5,594 L492.5,594 Z" fill="#C8CCD4" />
<path d="M490.5,584 L494.5,583 L495.5,593 L493.5,593 Z" fill="#505860" />
<text x="503.50" y="591.60" font-size="10" fill="#FFFFFF" font-weight="normal" font-style="normal" font-family="Liberation Sans" textLength="35.50" lengthAdjust="spacingAndGlyphs">15 m....</text>
<rect x="547" y="577" width="30" height="23" fill="url(#enbg)"/>
<rect x="555.3" y="582.5" width="11" height="9.5" fill="#2A58B8" />
<text x="556.00" y="590.74" font-size="9" fill="#F4F8FF" font-weight="bold" font-style="normal" font-family="Liberation Sans" textLength="10.00" lengthAdjust="spacingAndGlyphs">EN</text>
<path d="M577,576.5 L800,576.5 L800,600 L577,600 Z" fill="url(#tray)" />
<rect x="577" y="576.5" width="6" height="23.5" fill="url(#trayl)" />
<line x1="577" y1="576.5" x2="800" y2="576.5" stroke="#8AA4D8" stroke-width="1" />
<rect x="586.5" y="582.5" width="11.5" height="11.5" fill="#CDE4FA" stroke="#1A2E68" stroke-width="1.4" />
<path d="M589,592 L595.5,584" fill="none" stroke="#1A2E68" stroke-width="1.2" />
<ellipse cx="606" cy="588" rx="5.5" ry="4.5" fill="#D8C88A" stroke="#A89858" stroke-width="0.8"/>
<circle cx="605" cy="588.5" r="2" fill="#8A7030"/>
<rect x="617" y="582.5" width="8" height="7" fill="#78B0E8" stroke="#3A6AA8" stroke-width="0.8" />
<rect x="620" y="587" width="6" height="6" fill="#90C0F0" stroke="#3A6AA8" stroke-width="0.8" />
<path d="M631.5,582 L640.5,582 L640.5,589 Q636,595 636,595 Q631.5,589 631.5,589 Z" fill="#F0C838" stroke="#C09018" stroke-width="0.7" />
<line x1="634.5" y1="583" x2="634.5" y2="591" stroke="#C09018" stroke-width="0.8" />
<line x1="637.5" y1="583" x2="637.5" y2="591" stroke="#C09018" stroke-width="0.8" />
<circle cx="649" cy="588" r="5.3" fill="none" stroke="#18A040" stroke-width="1.6"/>
<circle cx="649" cy="588" r="2" fill="none" stroke="#18A040" stroke-width="1.4"/>
<path d="M651,586 L651,590 Q652,591.5 654,590" fill="none" stroke="#18A040" stroke-width="1.3" />
<path d="M657.5,582 L668.5,582 L668.5,591 Q663,596 663,596 Q657.5,591 657.5,591 Z" fill="#2A6ADA" />
<path d="M660,587 L662.8,589.8 L666,585.5" fill="none" stroke="#FFFFFF" stroke-width="1.5" />
<path d="M671,588.5 L675.5,584.5 L684,584.5 L684,592.5 L675.5,592.5 Z" fill="#B8D468" stroke="#708838" stroke-width="0.8" />
<circle cx="677" cy="588.5" r="1" fill="#506018"/>
<path d="M689,584 L698,594" fill="none" stroke="#302818" stroke-width="1.8" />
<path d="M688,580.5 L689,583 L691.5,583 L689.5,584.5 L690.5,587 L688,585.5 L685.5,587 L686.5,584.5 L684.5,583 L687,583 Z" fill="#F0C020" />
<rect x="700" y="581.5" width="14" height="13" fill="#10184A" />
<circle cx="707" cy="588" r="4.3" fill="none" stroke="#B0B0B0" stroke-width="1.2" stroke-dasharray="2 1"/>
<circle cx="707" cy="588" r="2" fill="#F0F0E0"/>
<circle cx="719" cy="587.5" r="4.3" fill="#D0D4DC" stroke="#505860" stroke-width="1.1"/>
<path d="M717,590 L720,585" fill="none" stroke="#505860" stroke-width="1" />
<text x="732.50" y="592.28" font-size="10.5" fill="#141C3C" font-weight="normal" font-style="normal" font-family="Liberation Sans" textLength="51.50" lengthAdjust="spacingAndGlyphs">12:17 Вс 20</text>
<rect x="11" y="54.7" width="291.5" height="443" rx="6" fill="#2C64D0"/>
<rect x="11" y="62" width="291.5" height="435.7" fill="#3A68C0" />
<rect x="11.5" y="55" width="290.5" height="22.5" rx="6" fill="url(#dtitle)"/>
<rect x="11.5" y="62" width="290.5" height="15.5" fill="url(#dtitle)" />
<rect x="299.5" y="58" width="2.5" height="19" fill="#4A8CF0" opacity="0.8"/>
<rect x="11.5" y="77" width="1.8" height="419" fill="#3C60A8" />
<rect x="300.7" y="77" width="1.8" height="419" fill="#3C60A8" />
<rect x="11.5" y="495.7" width="291" height="1.8" fill="#3C60A8" />
<rect x="13.3" y="77.3" width="287.4" height="418.4" fill="#EFEBEE" />
<line x1="13.3" y1="77.8" x2="300.7" y2="77.8" stroke="#FAFAFC" stroke-width="1" />
<line x1="13.8" y1="77.3" x2="13.8" y2="495.7" stroke="#FAFAFC" stroke-width="1" />
<text x="15.50" y="71.28" font-size="10.5" fill="#FFFFFF" font-weight="bold" font-style="normal" font-family="Liberation Sans" textLength="70.00" lengthAdjust="spacingAndGlyphs">Bridle Settings</text>
<rect x="283.5" y="59.8" width="15" height="14.5" rx="2.2" fill="#D45A30" stroke="#F0E0E0" stroke-width="1"/>
<rect x="285" y="61.5" width="12" height="11" rx="1.5" fill="#E07040" opacity="0.6"/>
<path d="M287.3,63.5 L294.7,71 M294.7,63.5 L287.3,71" fill="none" stroke="#FFFFFF" stroke-width="1.5" />
<text x="19.00" y="98.20" font-size="10" fill="#1C1C1C" font-weight="normal" font-style="normal" font-family="Liberation Sans" textLength="41.30" lengthAdjust="spacingAndGlyphs">Bridle Type</text>
<rect x="66.5" y="87.5" width="68" height="14" fill="#FFFFFF" stroke="#9CA0A8" stroke-width="1" />
<rect x="121" y="88" width="13" height="13" fill="url(#cbtn)" stroke="#A8B8D4" stroke-width="0.7"/>
<path d="M124.3,92.9 L127.5,96.1 L130.7,92.9" fill="none" stroke="#3A4E8A" stroke-width="1.9" />
<rect x="68" y="89" width="52" height="11" fill="#3161C4" />
<text x="69.00" y="98.10" font-size="10" fill="#fff" font-weight="normal" font-style="normal" font-family="Liberation Sans" textLength="46.00" lengthAdjust="spacingAndGlyphs">Paraglider</text>
<circle cx="59.7" cy="112.7" r="4.5" fill="#EEF0F2" stroke="#4A5A60" stroke-width="1.1"/>
<text x="67.00" y="116.30" font-size="10" fill="#1C1C1C" font-weight="normal" font-style="normal" font-family="Liberation Sans" textLength="20.00" lengthAdjust="spacingAndGlyphs">2 line</text>
<circle cx="101.2" cy="112.7" r="4.5" fill="#E4ECE4" stroke="#4A5A60" stroke-width="1.1"/>
<circle cx="101.2" cy="112.7" r="2.6" fill="#9ACC9A"/>
<circle cx="101.2" cy="112.7" r="1.7" fill="#2E7A3A"/>
<text x="109.00" y="116.30" font-size="10" fill="#1C1C1C" font-weight="normal" font-style="normal" font-family="Liberation Sans" textLength="19.00" lengthAdjust="spacingAndGlyphs">4 line</text>
<rect x="22.0" y="129.5" width="269.5" height="221.5" rx="3" fill="none" stroke="#D6D3CE" stroke-width="1"/>
<rect x="26.5" y="124" width="53.0" height="10" fill="#EFEBEE" />
<text x="28.50" y="133.10" font-size="10" fill="#4A64A6" font-weight="normal" font-style="normal" font-family="Liberation Sans" textLength="49.00" lengthAdjust="spacingAndGlyphs">Primary Bridle</text>
<rect x="29.5" y="137.0" width="73" height="14.5" fill="#FFFFFF" stroke="#9CA0A8" stroke-width="1" />
<rect x="89" y="137.5" width="13" height="13.5" fill="url(#cbtn)" stroke="#A8B8D4" stroke-width="0.7"/>
<path d="M92.3,142.65 L95.5,145.85 L98.7,142.65" fill="none" stroke="#3A4E8A" stroke-width="1.9" />
<text x="32.00" y="147.85" font-size="10" fill="#000" font-weight="normal" font-style="normal" font-family="Liberation Sans" textLength="54.00" lengthAdjust="spacingAndGlyphs">Bridle Spacing</text>
<rect x="106.5" y="137.0" width="82.5" height="14.5" fill="#FFFFFF" stroke="#9CA0A8" stroke-width="1" />
<text x="109.00" y="147.85" font-size="10" fill="#141414" font-weight="normal" font-style="normal" font-family="Liberation Sans" textLength="17.00" lengthAdjust="spacingAndGlyphs">1,2,3</text>
<text x="204.40" y="147.40" font-size="10" fill="#1C1C1C" font-weight="normal" font-style="normal" font-family="Liberation Sans" textLength="22.60" lengthAdjust="spacingAndGlyphs">Points</text>
<rect x="230.0" y="137.0" width="26.5" height="14.5" fill="#FFFFFF" stroke="#9CA0A8" stroke-width="1" />
<rect x="243" y="137.5" width="13" height="13.5" fill="url(#cbtn)" stroke="#A8B8D4" stroke-width="0.7"/>
<path d="M246.3,142.65 L249.5,145.85 L252.7,142.65" fill="none" stroke="#3A4E8A" stroke-width="1.9" />
<text x="232.50" y="147.85" font-size="10" fill="#000" font-weight="normal" font-style="normal" font-family="Liberation Sans" textLength="6.00" lengthAdjust="spacingAndGlyphs">5</text>
<text x="194.50" y="173.90" font-size="10" fill="#1C1C1C" font-weight="normal" font-style="normal" font-family="Liberation Sans" textLength="6.00" lengthAdjust="spacingAndGlyphs">A</text>
<rect x="205.0" y="163.5" width="24.0" height="13.5" fill="#FFFFFF" stroke="#9CA0A8" stroke-width="1" />
<text x="207.50" y="173.85" font-size="10" fill="#141414" font-weight="normal" font-style="normal" font-family="Liberation Sans" textLength="5.50" lengthAdjust="spacingAndGlyphs">7</text>
<text x="194.50" y="189.90" font-size="10" fill="#1C1C1C" font-weight="normal" font-style="normal" font-family="Liberation Sans" textLength="6.00" lengthAdjust="spacingAndGlyphs">B</text>
<rect x="205.0" y="179.5" width="24.0" height="13.5" fill="#FFFFFF" stroke="#9CA0A8" stroke-width="1" />
<text x="207.50" y="189.85" font-size="10" fill="#141414" font-weight="normal" font-style="normal" font-family="Liberation Sans" textLength="11.00" lengthAdjust="spacingAndGlyphs">29</text>
<text x="232.50" y="189.90" font-size="10" fill="#1C1C1C" font-weight="normal" font-style="normal" font-family="Liberation Sans" textLength="39.00" lengthAdjust="spacingAndGlyphs">% of chord</text>
<text x="194.50" y="206.90" font-size="10" fill="#1C1C1C" font-weight="normal" font-style="normal" font-family="Liberation Sans" textLength="6.00" lengthAdjust="spacingAndGlyphs">C</text>
<rect x="205.0" y="196.5" width="24.0" height="13.5" fill="#FFFFFF" stroke="#9CA0A8" stroke-width="1" />
<text x="207.50" y="206.85" font-size="10" fill="#141414" font-weight="normal" font-style="normal" font-family="Liberation Sans" textLength="11.00" lengthAdjust="spacingAndGlyphs">52</text>
<text x="232.50" y="206.90" font-size="10" fill="#1C1C1C" font-weight="normal" font-style="normal" font-family="Liberation Sans" textLength="39.00" lengthAdjust="spacingAndGlyphs">% of chord</text>
<text x="194.50" y="222.90" font-size="10" fill="#1C1C1C" font-weight="normal" font-style="normal" font-family="Liberation Sans" textLength="6.00" lengthAdjust="spacingAndGlyphs">D</text>
<rect x="205.0" y="212.5" width="24.0" height="13.5" fill="#FFFFFF" stroke="#9CA0A8" stroke-width="1" />
<text x="207.50" y="222.85" font-size="10" fill="#141414" font-weight="normal" font-style="normal" font-family="Liberation Sans" textLength="11.00" lengthAdjust="spacingAndGlyphs">77</text>
<text x="232.50" y="222.90" font-size="10" fill="#1C1C1C" font-weight="normal" font-style="normal" font-family="Liberation Sans" textLength="39.00" lengthAdjust="spacingAndGlyphs">% of chord</text>
<text x="194.50" y="239.90" font-size="10" fill="#1C1C1C" font-weight="normal" font-style="normal" font-family="Liberation Sans" textLength="6.00" lengthAdjust="spacingAndGlyphs">E</text>
<rect x="205.0" y="229.5" width="24.0" height="13.5" fill="#FFFFFF" stroke="#9CA0A8" stroke-width="1" />
<text x="207.50" y="239.85" font-size="10" fill="#141414" font-weight="normal" font-style="normal" font-family="Liberation Sans" textLength="16.50" lengthAdjust="spacingAndGlyphs">100</text>
<text x="232.50" y="239.90" font-size="10" fill="#1C1C1C" font-weight="normal" font-style="normal" font-family="Liberation Sans" textLength="39.00" lengthAdjust="spacingAndGlyphs">% of chord</text>
<rect x="233.0" y="163.5" width="54.5" height="13.5" fill="#EEEBEC" stroke="#B8B8BA" stroke-width="1" />
<rect x="273" y="164" width="14" height="12.5" fill="#E2E8F4" />
<path d="M276.8,168.65 L280.0,171.85 L283.2,168.65" fill="none" stroke="#C0CADA" stroke-width="1.9" />
<text x="235.50" y="173.85" font-size="10" fill="#A9A9A0" font-weight="normal" font-style="normal" font-family="Liberation Sans" textLength="37.00" lengthAdjust="spacingAndGlyphs">% of chord</text>
<rect x="25.0" y="178.5" width="122.0" height="44" rx="3" fill="none" stroke="#D6D3CE" stroke-width="1"/>
<rect x="29.5" y="173" width="89.0" height="10" fill="#EFEBEE" />
<text x="31.50" y="182.10" font-size="10" fill="#4A64A6" font-weight="normal" font-style="normal" font-family="Liberation Sans" textLength="85.00" lengthAdjust="spacingAndGlyphs">Towpoints (% of chord)</text>
<text x="31.50" y="196.40" font-size="10" fill="#1C1C1C" font-weight="normal" font-style="normal" font-family="Liberation Sans" textLength="32.70" lengthAdjust="spacingAndGlyphs">Centre X</text>
<rect x="69.9" y="185.8" width="23.0" height="14.0" fill="#FFFFFF" stroke="#9CA0A8" stroke-width="1" />
<text x="72.40" y="196.40" font-size="10" fill="#141414" font-weight="normal" font-style="normal" font-family="Liberation Sans" textLength="10.00" lengthAdjust="spacingAndGlyphs">18</text>
<text x="98.50" y="196.40" font-size="10" fill="#1C1C1C" font-weight="normal" font-style="normal" font-family="Liberation Sans" textLength="6.50" lengthAdjust="spacingAndGlyphs">Y</text>
<rect x="109.3" y="185.8" width="25.60000000000001" height="14.0" fill="#EEEBEC" stroke="#B8B8BA" stroke-width="1" />
<text x="111.80" y="196.40" font-size="10" fill="#A9A9A0" font-weight="normal" font-style="normal" font-family="Liberation Sans" textLength="15.00" lengthAdjust="spacingAndGlyphs">110</text>
<text x="26.60" y="213.10" font-size="10" fill="#1C1C1C" font-weight="normal" font-style="normal" font-family="Liberation Sans" textLength="37.60" lengthAdjust="spacingAndGlyphs">Wingtip X</text>
<rect x="69.9" y="202.5" width="23.0" height="13.5" fill="#FFFFFF" stroke="#9CA0A8" stroke-width="1" />
<text x="72.40" y="212.85" font-size="10" fill="#141414" font-weight="normal" font-style="normal" font-family="Liberation Sans" textLength="10.00" lengthAdjust="spacingAndGlyphs">18</text>
<text x="98.50" y="213.10" font-size="10" fill="#1C1C1C" font-weight="normal" font-style="normal" font-family="Liberation Sans" textLength="6.50" lengthAdjust="spacingAndGlyphs">Y</text>
<rect x="109.3" y="202.5" width="25.60000000000001" height="13.5" fill="#EEEBEC" stroke="#B8B8BA" stroke-width="1" />
<text x="111.80" y="212.85" font-size="10" fill="#A9A9A0" font-weight="normal" font-style="normal" font-family="Liberation Sans" textLength="15.00" lengthAdjust="spacingAndGlyphs">110</text>
<rect x="25.0" y="231.5" width="157.5" height="112.5" rx="3" fill="none" stroke="#D6D3CE" stroke-width="1"/>
<rect x="29.5" y="226" width="69.5" height="10" fill="#EFEBEE" />
<text x="31.50" y="235.10" font-size="10" fill="#4A64A6" font-weight="normal" font-style="normal" font-family="Liberation Sans" textLength="65.50" lengthAdjust="spacingAndGlyphs">Primary Cascades</text>
<rect x="30.8" y="248.9" width="28.3" height="14.900000000000006" fill="#FFFFFF" stroke="#9CA0A8" stroke-width="1" />
<rect x="45.6" y="249.4" width="13" height="13.900000000000006" fill="url(#cbtn)" stroke="#A8B8D4" stroke-width="0.7"/>
<path d="M48.9,254.75000000000003 L52.1,257.95000000000005 L55.300000000000004,254.75000000000003" fill="none" stroke="#3A4E8A" stroke-width="1.9" />
<text x="33.30" y="259.95" font-size="10" fill="#000" font-weight="normal" font-style="normal" font-family="Liberation Sans" textLength="6.00" lengthAdjust="spacingAndGlyphs">2</text>
<text x="71.30" y="244.60" font-size="10" fill="#1C1C1C" font-weight="normal" font-style="normal" font-family="Liberation Sans" textLength="34.00" lengthAdjust="spacingAndGlyphs">Y dist (%)</text>
<text x="113.20" y="244.60" font-size="10" fill="#1C1C1C" font-weight="normal" font-style="normal" font-family="Liberation Sans" textLength="55.80" lengthAdjust="spacingAndGlyphs">Cascade count</text>
<rect x="71.8" y="246.8" width="22.400000000000006" height="14.0" fill="#FFFFFF" stroke="#9CA0A8" stroke-width="1" />
<text x="74.30" y="257.40" font-size="10" fill="#141414" font-weight="normal" font-style="normal" font-family="Liberation Sans" textLength="10.00" lengthAdjust="spacingAndGlyphs">30</text>
<rect x="112.8" y="246.8" width="57.500000000000014" height="14.0" fill="#FFFFFF" stroke="#9CA0A8" stroke-width="1" />
<text x="115.30" y="257.40" font-size="10" fill="#141414" font-weight="normal" font-style="normal" font-family="Liberation Sans" textLength="13.80" lengthAdjust="spacingAndGlyphs">1,2</text>
<rect x="71.8" y="261.95" width="22.400000000000006" height="14.0" fill="#FFFFFF" stroke="#9CA0A8" stroke-width="1" />
<text x="74.30" y="272.55" font-size="10" fill="#141414" font-weight="normal" font-style="normal" font-family="Liberation Sans" textLength="10.00" lengthAdjust="spacingAndGlyphs">50</text>
<rect x="112.8" y="261.95" width="57.500000000000014" height="14.0" fill="#FFFFFF" stroke="#9CA0A8" stroke-width="1" />
<text x="115.30" y="272.55" font-size="10" fill="#141414" font-weight="normal" font-style="normal" font-family="Liberation Sans" textLength="13.80" lengthAdjust="spacingAndGlyphs">1,1</text>
<rect x="71.8" y="277.1" width="22.400000000000006" height="14.0" fill="#EEEBEC" stroke="#B8B8BA" stroke-width="1" />
<text x="74.30" y="287.70" font-size="10" fill="#A9A9A0" font-weight="normal" font-style="normal" font-family="Liberation Sans" textLength="10.00" lengthAdjust="spacingAndGlyphs">70</text>
<rect x="112.8" y="277.1" width="57.500000000000014" height="14.0" fill="#EEEBEC" stroke="#B8B8BA" stroke-width="1" />
<text x="115.30" y="287.70" font-size="10" fill="#A9A9A0" font-weight="normal" font-style="normal" font-family="Liberation Sans" textLength="5.00" lengthAdjust="spacingAndGlyphs">2</text>
<rect x="71.8" y="292.25" width="22.400000000000006" height="14.0" fill="#EEEBEC" stroke="#B8B8BA" stroke-width="1" />
<text x="74.30" y="302.85" font-size="10" fill="#A9A9A0" font-weight="normal" font-style="normal" font-family="Liberation Sans" textLength="10.00" lengthAdjust="spacingAndGlyphs">70</text>
<rect x="112.8" y="292.25" width="57.500000000000014" height="14.0" fill="#EEEBEC" stroke="#B8B8BA" stroke-width="1" />
<text x="115.30" y="302.85" font-size="10" fill="#A9A9A0" font-weight="normal" font-style="normal" font-family="Liberation Sans" textLength="5.00" lengthAdjust="spacingAndGlyphs">2</text>
<rect x="71.8" y="307.40000000000003" width="22.400000000000006" height="14.0" fill="#EEEBEC" stroke="#B8B8BA" stroke-width="1" />
<text x="74.30" y="318.00" font-size="10" fill="#A9A9A0" font-weight="normal" font-style="normal" font-family="Liberation Sans" textLength="10.00" lengthAdjust="spacingAndGlyphs">70</text>
<rect x="112.8" y="307.40000000000003" width="57.500000000000014" height="14.0" fill="#EEEBEC" stroke="#B8B8BA" stroke-width="1" />
<text x="115.30" y="318.00" font-size="10" fill="#A9A9A0" font-weight="normal" font-style="normal" font-family="Liberation Sans" textLength="5.00" lengthAdjust="spacingAndGlyphs">1</text>
<rect x="71.8" y="322.55" width="22.400000000000006" height="14.0" fill="#EEEBEC" stroke="#B8B8BA" stroke-width="1" />
<text x="74.30" y="333.15" font-size="10" fill="#A9A9A0" font-weight="normal" font-style="normal" font-family="Liberation Sans" textLength="10.00" lengthAdjust="spacingAndGlyphs">70</text>
<rect x="112.8" y="322.55" width="57.500000000000014" height="14.0" fill="#EEEBEC" stroke="#B8B8BA" stroke-width="1" />
<text x="115.30" y="333.15" font-size="10" fill="#A9A9A0" font-weight="normal" font-style="normal" font-family="Liberation Sans" textLength="5.00" lengthAdjust="spacingAndGlyphs">1</text>
<rect x="191.8" y="280.5" width="93.0" height="63.5" rx="3" fill="none" stroke="#D6D3CE" stroke-width="1"/>
<rect x="196.3" y="275" width="78.19999999999999" height="10" fill="#EFEBEE" />
<text x="198.30" y="284.10" font-size="10" fill="#4A64A6" font-weight="normal" font-style="normal" font-family="Liberation Sans" textLength="74.20" lengthAdjust="spacingAndGlyphs">Single skin hybrids...</text>
<rect x="195.8" y="291.3" width="9.199999999999989" height="8.199999999999989" fill="#F6F5F4" stroke="#D8D8D4" stroke-width="1" />
<text x="208.30" y="298.90" font-size="10" fill="#B4B2AC" font-weight="normal" font-style="normal" font-family="Liberation Sans" textLength="54.20" lengthAdjust="spacingAndGlyphs">Split A-line in 3</text>
<text x="210.80" y="312.60" font-size="10" fill="#202020" font-weight="bold" font-style="normal" font-family="Liberation Sans" textLength="31.70" lengthAdjust="spacingAndGlyphs">% height</text>
<rect x="246.8" y="303.0" width="22.399999999999977" height="14.0" fill="#EEEBEC" stroke="#B8B8BA" stroke-width="1" />
<text x="249.30" y="313.60" font-size="10" fill="#A9A9A0" font-weight="normal" font-style="normal" font-family="Liberation Sans" textLength="10.00" lengthAdjust="spacingAndGlyphs">50</text>
<rect x="197.5" y="327.2" width="8.699999999999989" height="8.300000000000011" fill="#F6F5F4" stroke="#D8D8D4" stroke-width="1" />
<text x="209.70" y="329.90" font-size="10" fill="#B4B2AC" font-weight="normal" font-style="normal" font-family="Liberation Sans" textLength="67.00" lengthAdjust="spacingAndGlyphs">Shift wingtip A-line</text>
<text x="209.70" y="340.10" font-size="10" fill="#B4B2AC" font-weight="normal" font-style="normal" font-family="Liberation Sans" textLength="65.30" lengthAdjust="spacingAndGlyphs">(aka Trident Tips)</text>
<rect x="22.0" y="362.5" width="270.0" height="102.5" rx="3" fill="none" stroke="#D6D3CE" stroke-width="1"/>
<rect x="26.5" y="357" width="66.9" height="10" fill="#EFEBEE" />
<text x="28.50" y="366.10" font-size="10" fill="#4A64A6" font-weight="normal" font-style="normal" font-family="Liberation Sans" textLength="62.90" lengthAdjust="spacingAndGlyphs">Secondary Bridle</text>
<text x="65.30" y="379.40" font-size="10" fill="#1C1C1C" font-weight="normal" font-style="normal" font-family="Liberation Sans" textLength="41.90" lengthAdjust="spacingAndGlyphs">Chord (% of</text>
<text x="61.60" y="389.60" font-size="10" fill="#1C1C1C" font-weight="normal" font-style="normal" font-family="Liberation Sans" textLength="48.80" lengthAdjust="spacingAndGlyphs">centre chord)</text>
<text x="114.80" y="379.40" font-size="10" fill="#1C1C1C" font-weight="normal" font-style="normal" font-family="Liberation Sans" textLength="43.80" lengthAdjust="spacingAndGlyphs">Height (% of</text>
<text x="118.00" y="389.60" font-size="10" fill="#1C1C1C" font-weight="normal" font-style="normal" font-family="Liberation Sans" textLength="37.00" lengthAdjust="spacingAndGlyphs">wingspan)</text>
<text x="29.75" y="409.10" font-size="10" fill="#1C1C1C" font-weight="normal" font-style="normal" font-family="Liberation Sans" textLength="37.25" lengthAdjust="spacingAndGlyphs">Tow Point</text>
<rect x="74.1" y="398.0" width="31.10000000000001" height="14.199999999999989" fill="#FFFFFF" stroke="#9CA0A8" stroke-width="1" />
<text x="76.60" y="408.70" font-size="10" fill="#141414" font-weight="normal" font-style="normal" font-family="Liberation Sans" textLength="10.00" lengthAdjust="spacingAndGlyphs">25</text>
<rect x="121.1" y="398.0" width="30.700000000000017" height="14.199999999999989" fill="#FFFFFF" stroke="#9CA0A8" stroke-width="1" />
<text x="123.60" y="408.70" font-size="10" fill="#141414" font-weight="normal" font-style="normal" font-family="Liberation Sans" textLength="10.00" lengthAdjust="spacingAndGlyphs">65</text>
<text x="45.80" y="426.60" font-size="10" fill="#1C1C1C" font-weight="normal" font-style="normal" font-family="Liberation Sans" textLength="21.70" lengthAdjust="spacingAndGlyphs">Brake</text>
<rect x="74.1" y="416.0" width="31.10000000000001" height="13.699999999999989" fill="#EEEBEC" stroke="#B8B8BA" stroke-width="1" />
<text x="76.60" y="426.45" font-size="10" fill="#A9A9A0" font-weight="normal" font-style="normal" font-family="Liberation Sans" textLength="10.00" lengthAdjust="spacingAndGlyphs">25</text>
<rect x="121.1" y="416.0" width="30.700000000000017" height="13.699999999999989" fill="#EEEBEC" stroke="#B8B8BA" stroke-width="1" />
<text x="123.60" y="426.45" font-size="10" fill="#A9A9A0" font-weight="normal" font-style="normal" font-family="Liberation Sans" textLength="10.00" lengthAdjust="spacingAndGlyphs">65</text>
<text x="36.30" y="450.60" font-size="10" fill="#1C1C1C" font-weight="normal" font-style="normal" font-family="Liberation Sans" textLength="32.90" lengthAdjust="spacingAndGlyphs">Cascade</text>
<rect x="74.1" y="440.7" width="49.400000000000006" height="14.199999999999989" fill="#EEEBEC" stroke="#B8B8BA" stroke-width="1" />
<text x="76.60" y="451.40" font-size="10" fill="#A9A9A0" font-weight="normal" font-style="normal" font-family="Liberation Sans" textLength="5.00" lengthAdjust="spacingAndGlyphs">2</text>
<text x="182.70" y="376.80" font-size="10" fill="#1C1C1C" font-weight="normal" font-style="normal" font-family="Liberation Sans" textLength="49.90" lengthAdjust="spacingAndGlyphs">Separation (%</text>
<text x="183.80" y="387.20" font-size="10" fill="#1C1C1C" font-weight="normal" font-style="normal" font-family="Liberation Sans" textLength="47.70" lengthAdjust="spacingAndGlyphs">of wingspan)</text>
<text x="169.75" y="397.40" font-size="10" fill="#1C1C1C" font-weight="normal" font-style="normal" font-family="Liberation Sans" textLength="17.25" lengthAdjust="spacingAndGlyphs">Auto</text>
<rect x="173.9" y="402.3" width="9.599999999999994" height="9.800000000000011" fill="#F4F4F2" stroke="#5C6E86" stroke-width="1" />
<rect x="190.8" y="398.5" width="30.5" height="15" fill="#FFFFFF" stroke="#9CA0A8" stroke-width="1" />
<text x="193.30" y="409.60" font-size="10" fill="#141414" font-weight="normal" font-style="normal" font-family="Liberation Sans" textLength="12.00" lengthAdjust="spacingAndGlyphs">0.4</text>
<rect x="226.5" y="398.5" width="30.5" height="15" fill="#FFFFFF" stroke="#9CA0A8" stroke-width="1" />
<rect x="243.5" y="399" width="13" height="14" fill="url(#cbtn)" stroke="#A8B8D4" stroke-width="0.7"/>
<path d="M246.8,404.4 L250.0,407.6 L253.2,404.4" fill="none" stroke="#3A4E8A" stroke-width="1.9" />
<text x="229.00" y="409.60" font-size="10" fill="#000" font-weight="normal" font-style="normal" font-family="Liberation Sans" textLength="8.00" lengthAdjust="spacingAndGlyphs">m</text>
<rect x="173.9" y="419.2" width="9.599999999999994" height="8.900000000000034" fill="#F6F5F4" stroke="#D8D8D4" stroke-width="1" />
<rect x="190.8" y="415.9" width="30.5" height="14.200000000000045" fill="#EEEBEC" stroke="#B8B8BA" stroke-width="1" />
<text x="193.30" y="426.60" font-size="10" fill="#A9A9A0" font-weight="normal" font-style="normal" font-family="Liberation Sans" textLength="12.00" lengthAdjust="spacingAndGlyphs">0.4</text>
<rect x="226.5" y="415.9" width="30.5" height="14.200000000000045" fill="#EEEBEC" stroke="#B8B8BA" stroke-width="1" />
<rect x="243.5" y="416.4" width="13" height="13.200000000000045" fill="#E2E8F4" />
<path d="M246.8,421.4 L250.0,424.6 L253.2,421.4" fill="none" stroke="#C0CADA" stroke-width="1.9" />
<text x="229.00" y="426.60" font-size="10" fill="#A9A9A0" font-weight="normal" font-style="normal" font-family="Liberation Sans" textLength="8.00" lengthAdjust="spacingAndGlyphs">m</text>
<path d="M172.00,366.00 C172.78,365.13 174.12,362.30 176.70,360.80 C179.28,359.30 180.28,357.76 187.50,357.00 C194.72,356.24 211.75,356.22 220.00,356.25 C228.25,356.28 230.75,355.46 237.00,357.20 C243.25,358.94 251.92,362.73 257.50,366.70 C263.08,370.67 267.33,376.03 270.50,381.00 C273.67,385.97 275.40,391.75 276.50,396.50 C277.60,401.25 277.55,404.52 277.10,409.50 C276.65,414.48 276.52,421.25 273.80,426.40 C271.08,431.55 265.67,436.98 260.80,440.40 C255.93,443.82 251.92,445.82 244.60,446.90 C237.28,447.98 225.03,447.72 216.90,446.90 C208.77,446.08 201.77,443.90 195.80,442.00 C189.83,440.10 185.17,437.93 181.10,435.50 C177.03,433.07 173.83,430.92 171.40,427.40 C168.97,423.88 167.42,419.80 166.50,414.40 C165.58,409.00 165.95,400.90 165.90,395.00 C165.85,389.10 165.43,383.25 166.20,379.00 C166.97,374.75 168.75,372.53 170.50,369.50 C172.25,366.47 175.67,362.25 176.70,360.80" fill="none" stroke="#B84050" stroke-width="1.1" stroke-linecap="round" stroke-linejoin="round"/>
<path d="M174.2,365.4 L180,365.4 M175.4,362.5 L175.4,371.2" fill="none" stroke="#B84050" stroke-width="1" />
<rect x="88.2" y="472.9" width="55.89999999999999" height="14.900000000000034" rx="2.5" fill="url(#btng)" stroke="#34446C" stroke-width="1.2"/>
<text x="111.15" y="483.95" font-size="10" fill="#000" font-weight="normal" font-style="normal" font-family="Liberation Sans" textLength="10.00" lengthAdjust="spacingAndGlyphs">OK</text>
<rect x="161.6" y="472.9" width="55.400000000000006" height="14.900000000000034" rx="2.5" fill="url(#btng)" stroke="#34446C" stroke-width="1.2"/>
<text x="176.30" y="483.95" font-size="10" fill="#000" font-weight="normal" font-style="normal" font-family="Liberation Sans" textLength="26.00" lengthAdjust="spacingAndGlyphs">Cancel</text>
<rect x="235.9" y="472.9" width="55.400000000000006" height="14.900000000000034" rx="2.5" fill="url(#btng)" stroke="#34446C" stroke-width="1.2"/>
<rect x="237.20000000000002" y="474.2" width="52.800000000000004" height="12.300000000000034" rx="1.5" fill="none" stroke="#7C9CE0" stroke-width="1.5"/>
<text x="252.60" y="483.95" font-size="10" fill="#000" font-weight="normal" font-style="normal" font-family="Liberation Sans" textLength="22.00" lengthAdjust="spacingAndGlyphs">Apply</text></svg></body></html>
